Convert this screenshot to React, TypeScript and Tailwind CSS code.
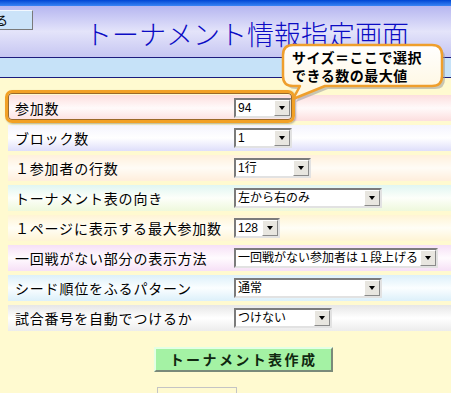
import React from "react";

type Row = { label: string; grad: string; w: string; text: string };

const rows: Row[] = [
  { label: "参加数", grad: "from-[#fcdede] via-[#fffafa] to-[#fcdede]", w: "w-[58px]", text: "94" },
  { label: "ブロック数", grad: "from-[#f4f4fe] via-[#ffffff] to-[#dedefa]", w: "w-[58px]", text: "1" },
  { label: "１参加者の行数", grad: "from-[#fff0dc] via-[#fffcf6] to-[#ffeedc]", w: "w-[77px]", text: "1行" },
  { label: "トーナメント表の向き", grad: "from-[#e0f6f2] via-[#fdfffa] to-[#eef8dc]", w: "w-[148px]", text: "左から右のみ" },
  { label: "１ページに表示する最大参加数", grad: "from-[#fff4d4] via-[#fffef6] to-[#fff4d4]", w: "w-[46px]", text: "128" },
  { label: "一回戦がない部分の表示方法", grad: "from-[#f6e0f6] via-[#fffbfe] to-[#f6e0f6]", w: "w-[204px]", text: "一回戦がない参加者は１段上げる" },
  { label: "シード順位をふるパターン", grad: "from-[#dcf0fa] via-[#fbfeff] to-[#dcf0fa]", w: "w-[148px]", text: "通常" },
  { label: "試合番号を自動でつけるか", grad: "from-[#e6e6e6] via-[#ffffff] to-[#ececec]", w: "w-[98px]", text: "つけない" },
];

function Sel({ w, text }: { w: string; text: string }) {
  return (
    <div
      className={`${w} h-[20px] flex bg-white border-2 border-t-[#7b7b7b] border-l-[#7b7b7b] border-b-[#e2e2e2] border-r-[#e2e2e2]`}
    >
      <div className="flex-1 min-w-0 pl-[2px] text-[12px] leading-[16px] text-black whitespace-nowrap overflow-hidden font-['Liberation_Sans','Noto_Sans_CJK_JP',sans-serif]">
        {text}
      </div>
      <div className="w-[16px] shrink-0 h-full flex items-center justify-center bg-[#e8e6e0] border border-t-white border-l-white border-b-[#8a8a8a] border-r-[#8a8a8a]">
        <div className="w-0 h-0 border-l-[3.5px] border-r-[3.5px] border-t-[4px] border-l-transparent border-r-transparent border-t-black" />
      </div>
    </div>
  );
}

export default function App() {
  return (
    <div className="relative w-[451px] h-[393px] overflow-hidden bg-[#fffad0] font-['Noto_Sans_CJK_JP',sans-serif]">
      <div className="h-[6px] bg-linear-to-b from-[#0044d4] to-[#3a84f4]" />
      <div className="h-[51px] flex items-start bg-linear-to-b from-[#b6b6f0] via-[#e4e4fa] to-[#c6c6f2]">
        <div className="mt-[4px] ml-[-40px] w-[73px] h-[20px] shrink-0 bg-[#cbe3f9] border border-t-[#f2f8ff] border-l-[#f2f8ff] border-b-[#7a7a7a] border-r-[#7a7a7a] text-[13px] leading-[18px] pl-[21px] text-black whitespace-nowrap">
          戻る
        </div>
        <div className="ml-[52px] mt-[12px] text-[27px] leading-[32px] text-[#0c0cc4] font-light whitespace-nowrap">
          トーナメント情報指定画面
        </div>
      </div>
      <div className="h-px bg-[#1c1c7c]" />
      <div className="h-[19px] bg-[#c6e2f8]" />
      <div className="h-px bg-[#1c1c7c]" />

      <div className="relative ml-[8px] mt-[15px]">
        {rows.map((r) => (
          <div key={r.label} className="h-[30px] py-[2px]">
            <div className={`h-full flex items-center bg-linear-to-b ${r.grad}`}>
              <div className="w-[226px] pl-[7px] text-[14px] tracking-[0.8px] text-black whitespace-nowrap">
                {r.label}
              </div>
              <Sel w={r.w} text={r.text} />
            </div>
          </div>
        ))}
        <div className="absolute left-[-3px] top-[-3px] w-[290px] h-[33px] rounded-[7px] border-[3px] border-[#f2a126] shadow-[inset_0_0_0_1px_#9a6a2a,1px_1px_2px_rgba(0,0,0,0.3)]" />
      </div>

      <div className="ml-[154px] mt-[14px] w-[179px] h-[25px] flex items-center justify-center bg-[#a4f2a4] border-2 border-t-[#e4ffe4] border-l-[#e4ffe4] border-b-[#7a8a7a] border-r-[#7a8a7a] text-[14px] font-bold tracking-[2.4px] text-[#102810] whitespace-nowrap">
        トーナメント表作成
      </div>
      <div className="ml-[157px] mt-[15px] w-[80px] h-[20px] border border-[#c4c4c4]" />

      <svg className="absolute left-[280px] top-[42px]" width="170" height="62" viewBox="0 0 170 62">
        <defs>
          <linearGradient id="bf" x1="0" y1="0" x2="0" y2="1">
            <stop offset="0" stopColor="#ffffff" />
            <stop offset="1" stopColor="#fff6dc" />
          </linearGradient>
        </defs>
        <path
          d="M13,3 H152 Q162,3 162,13 V34 Q162,44 152,44 H45 L13,57 L20,44 H13 Q3,44 3,34 V13 Q3,3 13,3 Z"
          transform="translate(3,3)"
          fill="#9a9a9a"
          opacity="0.55"
        />
        <path
          d="M13,3 H152 Q162,3 162,13 V34 Q162,44 152,44 H45 L13,57 L20,44 H13 Q3,44 3,34 V13 Q3,3 13,3 Z"
          fill="url(#bf)"
          stroke="#ef9f2c"
          strokeWidth="2.5"
          strokeLinejoin="round"
        />
      </svg>
      <div className="absolute left-[292px] top-[48px] text-[14px] leading-[18px] font-bold tracking-[0.5px] text-black whitespace-nowrap">
        <div>サイズ＝ここで選択</div>
        <div>できる数の最大値</div>
      </div>
    </div>
  );
}
